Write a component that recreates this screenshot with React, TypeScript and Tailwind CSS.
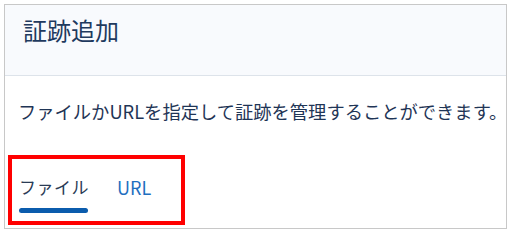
import React from "react";

export default function App() {
  const font = { fontFamily: '"Noto Sans CJK JP", "Noto Sans", sans-serif' };
  return (
    <div className="relative w-[511px] h-[233px] bg-white p-[4px]" style={font}>
      <div className="flex h-[225px] flex-col border border-[#c8c8c8] bg-white">
        <div className="h-[71px] shrink-0 border-b border-[#dde3ea] bg-[#f8fafd] pl-[18px] pt-[8px]">
          <h1 className="text-[24px] leading-[34px] font-normal text-[#1f3a5f]">証跡追加</h1>
        </div>
        <p className="mt-[22px] pl-[13px] text-[18.3px] leading-[26px] text-[#1f3556] whitespace-nowrap">
          ファイルかURLを指定して証跡を管理することができます。
        </p>
        <div className="mt-[52px] flex gap-[28px] pl-[14px]">
          <div className="flex flex-col items-start">
            <span className="text-[17px] leading-[22px] text-[#2a3b55] tracking-[0.5px]">ファイル</span>
            <div className="mt-[10px] h-[5px] w-[69px] rounded-full bg-[#0b5cad]" />
          </div>
          <span className="text-[18px] leading-[22px] text-[#1f6fbf]">URL</span>
        </div>
      </div>
      <div className="absolute left-[8px] top-[155px] h-[70px] w-[177px] border-[4px] border-[#ff0000]" />
    </div>
  );
}
